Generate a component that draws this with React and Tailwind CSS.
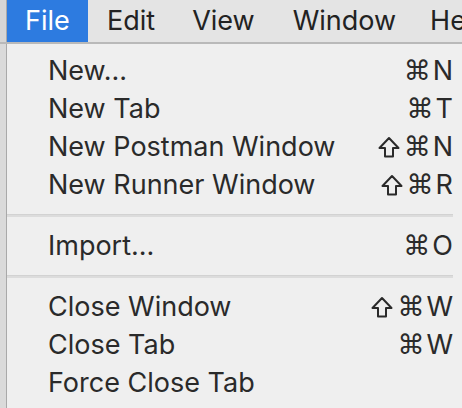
import React from "react";

const groups = [
  [
    { label: "New...", shift: false, key: "N" },
    { label: "New Tab", shift: false, key: "T" },
    { label: "New Postman Window", shift: true, key: "N" },
    { label: "New Runner Window", shift: true, key: "R" },
  ],
  [{ label: "Import...", shift: false, key: "O" }],
  [
    { label: "Close Window", shift: true, key: "W" },
    { label: "Close Tab", shift: false, key: "W" },
    { label: "Force Close Tab", shift: false, key: "" },
  ],
];

const ShiftIcon = () => (
  <svg width="22" height="22" viewBox="0 0 22 22" className="mr-[4px]">
    <polygon
      points="11,2 20.5,12 15,12 15,20.5 7,20.5 7,12 1.5,12"
      fill="none"
      stroke="#2a2a2a"
      strokeWidth="2"
      strokeLinejoin="round"
    />
  </svg>
);

export default function App() {
  return (
    <div
      className="w-[462px] h-[408px] overflow-hidden bg-[#efefef] flex flex-col"
      style={{ fontFamily: "Inter, 'Liberation Sans', sans-serif" }}
    >
      {/* menu bar */}
      <div className="h-[44px] shrink-0 flex bg-[#e4e4e4] border-b-2 border-[#b9b9b9] text-[27px] text-[#222] whitespace-nowrap">
        <div className="w-[7px] shrink-0 bg-[#d6d6d6] border-r border-[#a9a9a9]" />
        <div className="w-[81px] shrink-0 bg-[#2d7be0] text-white pl-[18px] leading-[42px]">File</div>
        <div className="flex shrink-0 leading-[42px]">
          <span className="ml-[19px]">Edit</span>
          <span className="ml-[37px]">View</span>
          <span className="ml-[38px]">Window</span>
          <span className="ml-[34px]">He</span>
        </div>
      </div>

      {/* dropdown */}
      <div className="flex flex-1">
        <div className="w-[7px] bg-[#dadada] border-r border-[#a9a9a9]" />
        <div className="flex-1 pt-[8px] pr-[9px] text-[27px] text-[#2a2a2a]">
          {groups.map((g, gi) => (
            <div key={gi}>
              {gi > 0 && (
                <div className="h-[23px] flex flex-col justify-center">
                  <div className="h-[3px] bg-[#dcdcdc] border-t border-[#d2d2d2]" />
                </div>
              )}
              {g.map((item) => (
                <div key={item.label} className="h-[38px] flex items-center justify-between pl-[41px]">
                  <span>{item.label}</span>
                  {item.key && (
                    <span className="flex items-center">
                      {item.shift && <ShiftIcon />}
                      <span
                        className="text-[27px] mr-[2px]"
                        style={{ fontFamily: "'DejaVu Sans', sans-serif" }}
                      >
                        ⌘
                      </span>
                      <span>{item.key}</span>
                    </span>
                  )}
                </div>
              ))}
            </div>
          ))}
        </div>
      </div>
    </div>
  );
}
